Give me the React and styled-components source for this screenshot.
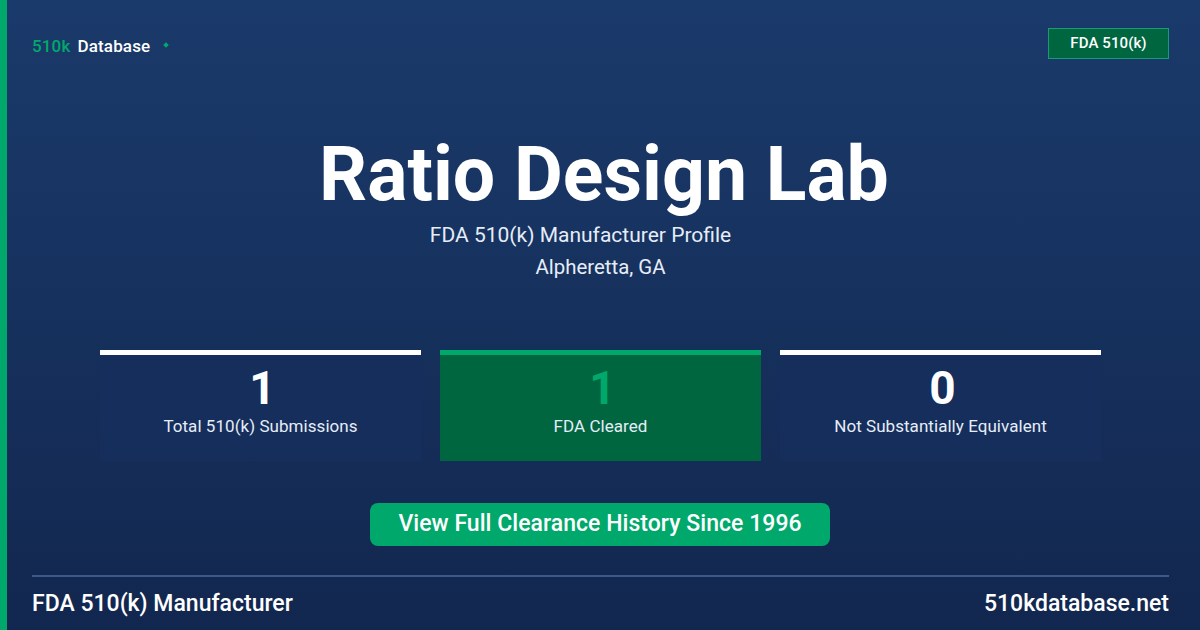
import React from "react";
import styled, { createGlobalStyle } from "styled-components";

const Global = createGlobalStyle`
  html, body { margin: 0; padding: 0; }
  body { width: 1200px; height: 630px; overflow: hidden; font-family: Roboto, "Liberation Sans", sans-serif; }
`;

const Page = styled.div`
  box-sizing: border-box;
  width: 1200px;
  height: 630px;
  display: flex;
  flex-direction: column;
  padding: 28px 31px 0 25px;
  border-left: 7px solid #00a86b;
  background: linear-gradient(180deg, #1a3a6b 0%, #12274f 100%);
  color: #fff;
`;

const Header = styled.header`
  display: flex;
  justify-content: space-between;
  align-items: flex-start;
  height: 31px;
`;

const Brand = styled.div`
  display: flex;
  align-items: center;
  height: 36px;
  font-size: 17px;
  font-weight: 500;
  letter-spacing: 0.15px;
`;

const BrandAccent = styled.span`
  color: #00a86b;
  margin-right: 7px;
`;

const BrandDot = styled.span`
  width: 4px;
  height: 4px;
  margin: 0 0 3px 14px;
  background: #00a86b;
  transform: rotate(45deg);
`;

const Badge = styled.div`
  box-sizing: border-box;
  width: 121px;
  height: 31px;
  padding-bottom: 2px;
  display: flex;
  align-items: center;
  justify-content: center;
  background: #006640;
  border: 1px solid #1a9a78;
  font-size: 15px;
  font-weight: 500;
  letter-spacing: 0.1px;
`;

const Hero = styled.section`
  display: flex;
  flex-direction: column;
  align-items: center;
  margin-top: 73px;
`;

const Title = styled.h1`
  margin: 0 0 7px;
  padding-left: 7px;
  font-size: 75.2px;
  line-height: 84px;
  font-weight: 700;
`;

const Subtitle = styled.p`
  margin: 0;
  padding-right: 40px;
  font-size: 21px;
  line-height: 24px;
  color: #e6edf7;
`;

const Location = styled.p`
  margin: 8px 0 0;
  font-size: 20.4px;
  line-height: 24px;
  color: #e6edf7;
`;

const Stats = styled.div`
  display: grid;
  grid-template-columns: repeat(3, 321px);
  gap: 19px;
  justify-content: center;
  margin-top: 71px;
`;

const Stat = styled.div`
  box-sizing: border-box;
  height: 111px;
  display: flex;
  flex-direction: column;
  align-items: center;
  border-top: 5px solid ${(p) => (p.$accent ? "#00a86b" : "#fff")};
  background: ${(p) => (p.$accent ? "#006640" : "#152e5c")};
`;

const StatValue = styled.div`
  margin-top: 7px;
  padding-left: 4px;
  font-size: 46px;
  line-height: 52px;
  font-weight: 700;
  color: ${(p) => (p.$accent ? "#00a86b" : "#fff")};
`;

const StatLabel = styled.div`
  margin-top: 2px;
  font-size: 17px;
  line-height: 20px;
  letter-spacing: 0.05px;
  color: #e6edf7;
`;

const CtaRow = styled.div`
  display: flex;
  justify-content: center;
  margin-top: 42px;
  padding-right: 1px;
`;

const Cta = styled.div`
  width: 460px;
  height: 43px;
  padding-bottom: 2px;
  box-sizing: border-box;
  display: flex;
  align-items: center;
  justify-content: center;
  border-radius: 8px;
  background: #00a86b;
  font-size: 23px;
  font-weight: 500;
  letter-spacing: 0.04px;
`;

const Footer = styled.footer`
  display: flex;
  justify-content: space-between;
  align-items: center;
  margin-top: 29px;
  height: 52px;
  border-top: 2px solid #3a5a8f;
  font-size: 23px;
  font-weight: 500;
`;

export default function App() {
  return (
    <>
      <Global />
      <Page>
        <Header>
          <Brand>
            <BrandAccent>510k</BrandAccent>
            Database
            <BrandDot />
          </Brand>
          <Badge>FDA 510(k)</Badge>
        </Header>
        <Hero>
          <Title>Ratio Design Lab</Title>
          <Subtitle>FDA 510(k) Manufacturer Profile</Subtitle>
          <Location>Alpheretta, GA</Location>
        </Hero>
        <Stats>
          <Stat>
            <StatValue>1</StatValue>
            <StatLabel>Total 510(k) Submissions</StatLabel>
          </Stat>
          <Stat $accent>
            <StatValue $accent>1</StatValue>
            <StatLabel>FDA Cleared</StatLabel>
          </Stat>
          <Stat>
            <StatValue>0</StatValue>
            <StatLabel>Not Substantially Equivalent</StatLabel>
          </Stat>
        </Stats>
        <CtaRow>
          <Cta>View Full Clearance History Since 1996</Cta>
        </CtaRow>
        <Footer>
          <span>FDA 510(k) Manufacturer</span>
          <span>510kdatabase.net</span>
        </Footer>
      </Page>
    </>
  );
}
